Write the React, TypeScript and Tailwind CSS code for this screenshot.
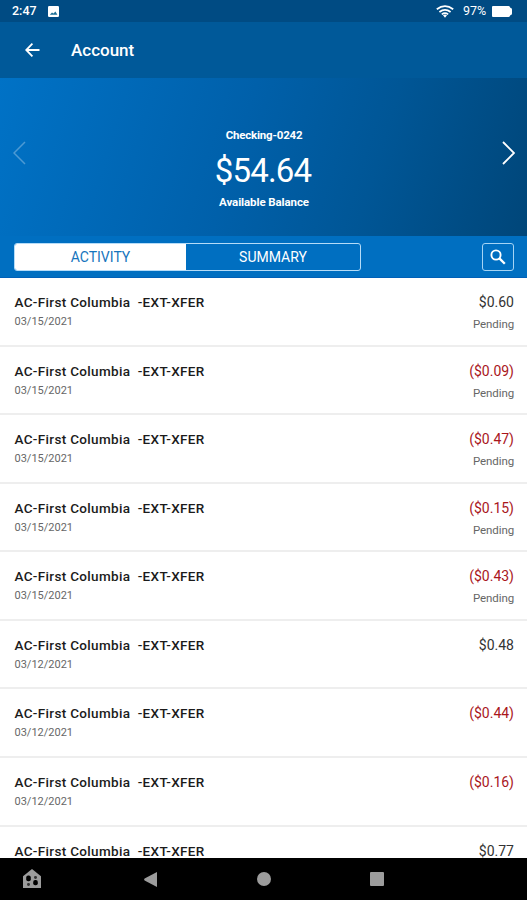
interface Transaction {
  date: string;
  amount: string;
  pending?: boolean;
}

const transactions: Transaction[] = [
  { date: "03/15/2021", amount: "$0.60", pending: true },
  { date: "03/15/2021", amount: "($0.09)", pending: true },
  { date: "03/15/2021", amount: "($0.47)", pending: true },
  { date: "03/15/2021", amount: "($0.15)", pending: true },
  { date: "03/15/2021", amount: "($0.43)", pending: true },
  { date: "03/12/2021", amount: "$0.48" },
  { date: "03/12/2021", amount: "($0.44)" },
  { date: "03/12/2021", amount: "($0.16)" },
  { date: "03/12/2021", amount: "$0.77" },
];

function StatusBar() {
  return (
    <div className="flex h-[22px] shrink-0 items-center bg-[#004b83] pr-[15px] pl-[12px] text-[12.5px] font-medium">
      <span className="w-[36px]">2:47</span>
      <svg className="h-[11px] w-[11px]" viewBox="0 0 11 11">
        <rect width="11" height="11" rx="1.2" fill="#fff" />
        <path d="M1.8 8.8 4 6.6l1.5 1L7.4 5.4l2 3.4z" fill="#1c6f97" />
      </svg>
      <svg className="ml-auto h-[13px] w-[18px]" viewBox="0 0 18 13" fill="none" stroke="#fff" strokeWidth="1.8">
        <path d="M.8 4.3Q9-2 17.2 4.3M3.4 7Q9 2.7 14.6 7M5.8 9.4Q9 7 12.2 9.4" />
        <path d="M7 10.2Q9 8.8 11 10.2L9 12.8z" fill="#fff" stroke="none" />
      </svg>
      <span className="ml-[9px] w-[29px] text-[12.5px] font-normal">97%</span>
      <svg className="h-[11px] w-[20px]" viewBox="0 0 20 11">
        <path d="M1 0H16.5Q18 0 18.3 1.7Q20 2 20 3.5V7.5Q20 9 18.3 9.3Q18 11 16.5 11H1Q0 11 0 10V1Q0 0 1 0z" fill="#fff" />
      </svg>
    </div>
  );
}

function Header() {
  return (
    <header className="flex h-14 shrink-0 items-center bg-[#005999] pl-[25px]">
      <svg className="h-[14px] w-[15px]" viewBox="0 0 15 14" fill="none" stroke="#fff" strokeWidth="1.8">
        <path d="M7.4.7 1.2 7l6.2 6.3M1.2 7H14.5" />
      </svg>
      <h1 className="ml-[31px] pt-[2px] text-[17px] font-medium">Account</h1>
    </header>
  );
}

function BalanceCard() {
  return (
    <section className="flex h-[158px] shrink-0 justify-between bg-[linear-gradient(107deg,#0072c6_0%,#0060aa_45%,#005696_70%,#004679_100%)] pr-[12px] pl-[13px]">
      <svg className="mt-[63px] h-[24px] w-[13px] opacity-30" viewBox="0 0 13 24" fill="none" stroke="#fff" strokeWidth="1.5">
        <path d="M12 1 1 12l11 11" />
      </svg>
      <div className="flex flex-col items-center text-center">
        <p className="mt-[49px] text-[11.5px] leading-[16px] font-bold tracking-[-0.2px]">Checking-0242</p>
        <p className="mt-[8px] -ml-[2px] text-[33px] leading-[40px] tracking-[-0.85px]">$54.64</p>
        <p className="mt-[3px] text-[11.5px] leading-[16px] font-bold tracking-[-0.1px]">Available Balance</p>
      </div>
      <svg className="mt-[63px] h-[24px] w-[13px]" viewBox="0 0 13 24" fill="none" stroke="#fff" strokeWidth="1.8">
        <path d="M1 1 12 12 1 23" />
      </svg>
    </section>
  );
}

function Tabs() {
  return (
    <nav className="flex h-[42px] shrink-0 items-start justify-between border-b border-[#0060b8] bg-[#006fc1] pr-[13px] pl-[14px] pt-[7px] text-[14px]">
      <div className="flex h-[28px] w-[347px] overflow-hidden rounded-[3px] border border-[#b5dcf8]">
        <button className="w-[171px] bg-white text-[#1675bd]">ACTIVITY</button>
        <button className="flex-1">SUMMARY</button>
      </div>
      <button className="flex h-[28px] w-[32px] items-center justify-center rounded-[3px] border border-[#a5d4f5]">
        <svg className="h-[16px] w-[16px]" viewBox="0 0 16 16" fill="none" stroke="#fff" strokeWidth="1.9">
          <circle cx="6" cy="6" r="4.6" />
          <path d="m9.4 9.4 5.4 5.4" strokeWidth="2.3" />
        </svg>
      </button>
    </nav>
  );
}

function TransactionRow({ date, amount, pending }: Transaction) {
  return (
    <li className="flex h-[68.57px] shrink-0 justify-between border-b-2 border-[#eeeeee] pr-[13px] pl-[14.5px] pt-[15px]">
      <div>
        <p className="text-[13.5px] leading-[18px] font-medium tracking-[0.33px] whitespace-pre text-[#1b1b1b]">AC-First Columbia  -EXT-XFER</p>
        <p className="mt-[3px] text-[11px] leading-[16px] text-[#666]">{date}</p>
      </div>
      <div className="text-right">
        <p className={`text-[14px] leading-[18px] ${amount.startsWith("(") ? "text-[#a9161c]" : "text-[#333]"}`}>{amount}</p>
        {pending && <p className="mt-[5px] text-[11.5px] leading-[16px] tracking-[-0.1px] text-[#666]">Pending</p>}
      </div>
    </li>
  );
}

function NavigationBar() {
  return (
    <footer className="flex h-[42px] shrink-0 items-center bg-black pl-[23px] text-[#9c9c9c]">
      <svg className="h-[20px] w-[18px]" viewBox="0 0 18 20" fill="currentColor">
        <path d="M9 0 18 7.3V19H0V7.3z" />
        <rect x="3.2" y="6.5" width="4.6" height="5.8" rx="2" fill="#000" />
        <rect x="4" y="14" width="3" height="3" rx="1.4" fill="#333" />
        <rect x="11" y="7" width="3" height="3" rx="1.4" fill="#333" />
        <rect x="10.2" y="11" width="4.6" height="5.3" rx="2" fill="#000" />
      </svg>
      <svg className="ml-[103px] h-[15px] w-[13px]" viewBox="0 0 13 15" fill="currentColor">
        <path d="M13 0V15L.6 8.5Q-.4 7.5.6 6.5z" />
      </svg>
      <div className="ml-[100px] size-[14px] rounded-full bg-current" />
      <div className="ml-[99px] size-[14px] rounded-[1px] bg-current" />
    </footer>
  );
}

export default function App() {
  return (
    <div className="flex h-[900px] w-[527px] flex-col overflow-hidden bg-white font-['Roboto',sans-serif] text-white">
      <StatusBar />
      <Header />
      <BalanceCard />
      <Tabs />
      <ul className="flex min-h-0 flex-1 flex-col overflow-hidden">
        {transactions.map((transaction, index) => (
          <TransactionRow key={index} {...transaction} />
        ))}
      </ul>
      <NavigationBar />
    </div>
  );
}
